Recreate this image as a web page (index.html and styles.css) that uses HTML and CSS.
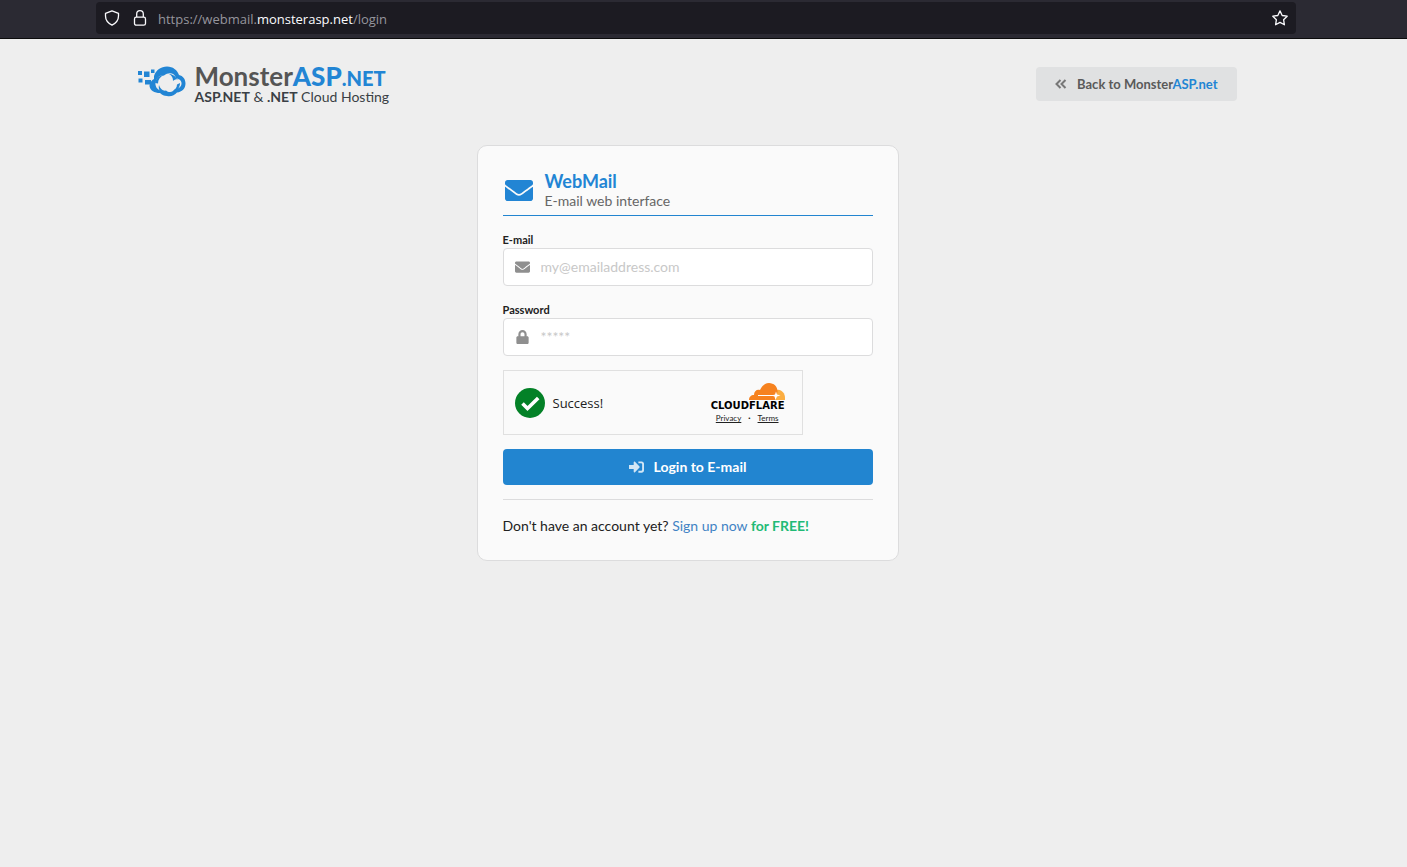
FILE: index.html
```html
<!DOCTYPE html>
<html lang="en">
<head>
<meta charset="utf-8">
<meta name="viewport" content="width=device-width, initial-scale=1">
<title>WebMail | MonsterASP.NET</title>
<link rel="stylesheet" href="styles.css">
</head>
<body>
<div class="browser-bar">
  <div class="address">
    <svg class="bar-icon" viewBox="0 0 16 16" aria-hidden="true"><path d="M8 .8 14.500 3.300V6c0 4-2.300 7-6.500 9.200C3.800 13 1.500 10 1.500 6V3.300Z"/></svg>
    <svg class="bar-icon" viewBox="0 0 16 16" aria-hidden="true"><rect x="2.500" y="7.200" width="11" height="8" rx="1.800"/><path d="M4.700 7V4a3.300 3.300 0 0 1 6.600 0v3"/></svg>
    <span class="url">https://webmail.<span class="domain">monsterasp.net</span>/login</span>
    <svg class="bar-icon star" viewBox="0 0 16 16" aria-hidden="true"><path d="M8 .9l2.200 4.600 5 .7-3.600 3.500.8 5.100L8 12.400l-4.400 2.400.8-5.100L.8 6.200l5-.7Z"/></svg>
  </div>
</div>
<div class="page">
  <header class="site-header">
    <a class="brand" href="#">
      <svg class="brand-mark" viewBox="0 0 48 32" aria-hidden="true">
        <g fill="#2285d4">
          <rect x="0" y="5" width="4" height="4"/><rect x="6" y="5.500" width="5.500" height="5.500"/><rect x="13" y="3.500" width="3.500" height="3.500"/>
          <rect x="0.500" y="12.500" width="4" height="4"/><rect x="7" y="14" width="6" height="4.500"/>
          <path d="M16 10C18 4 23 .5 29 .5c6 0 10 3.500 12 8.500 4 1 6.500 4 6.500 8.500 0 5-3.500 8.500-8.500 9-2.500 3-6 4.200-10 3.500-3 0-5-1-7-3-5.500 0-10-2.500-10.500-7 0-3 2.500-6 4.500-7Z"/>
        </g>
        <path d="M18 15c1-4 4-6 8-5.500 5-4 11-2.500 12 3 3.500 0 6 2.500 5.500 5.500-.5 3.500-3.500 5-6.500 5-2 3.500-6 4-9 1.500-4 1-9-.5-10-4-.8-2-.8-3.500 0-5.500Z" fill="#eee"/>
        <g fill="#2285d4">
          <path d="M17 17c1-5 4-7.500 9-8-4 2-6 4.500-6 8.500Z"/>
          <path d="M31 8c3 0 6 1.500 7.500 4.500l3 1c-3-.5-5 0-6.500 1.500 0-3-1-5.500-4-7Z"/>
          <path d="M42 17c0 5-3 8-8 8.500 3-1.500 5-4 5-7Z"/>
          <path d="M21 19c1 3.500 4 6 8 6.500l-2 2c-5-1-7-4-6-8.500Z"/>
        </g>
      </svg>
      <span class="brand-text">
        <span class="brand-name">Monster<b>ASP<small>.NET</small></b></span>
        <span class="brand-tag"><b>ASP.NET</b> &amp; <b>.NET</b> Cloud Hosting</span>
      </span>
    </a>
    <a class="back" href="#">
      <svg viewBox="0 0 12 10" aria-hidden="true"><path d="M5.500 1 1.500 5l4 4M10.500 1l-4 4 4 4"/></svg>
      <span>Back to Monster<span class="blue">ASP.net</span></span>
    </a>
  </header>
  <main class="card">
    <div class="title">
      <svg viewBox="0 0 512 384" aria-hidden="true"><path d="M502 127c4-3 10 0 10 4v205c0 26-22 48-48 48H48c-26 0-48-22-48-48V131c0-5 6-7 10-4 22 18 52 40 155 114 21 16 57 48 91 48s71-33 91-48c103-74 133-96 155-114ZM256 256c23 0 57-29 74-42 134-97 144-105 175-129 5-4 7-11 7-17V48c0-26-22-48-48-48H48C22 0 0 22 0 48v20c0 6 2 13 7 17 31 24 41 32 175 129 17 13 51 42 74 42Z"/></svg>
      <h1>WebMail<small>E-mail web interface</small></h1>
    </div>
    <form>
      <div class="field">
        <label for="email">E-mail</label>
        <div class="control">
          <svg viewBox="0 0 512 384" aria-hidden="true"><path d="M502 127c4-3 10 0 10 4v205c0 26-22 48-48 48H48c-26 0-48-22-48-48V131c0-5 6-7 10-4 22 18 52 40 155 114 21 16 57 48 91 48s71-33 91-48c103-74 133-96 155-114ZM256 256c23 0 57-29 74-42 134-97 144-105 175-129 5-4 7-11 7-17V48c0-26-22-48-48-48H48C22 0 0 22 0 48v20c0 6 2 13 7 17 31 24 41 32 175 129 17 13 51 42 74 42Z"/></svg>
          <input id="email" type="email" placeholder="my@emailaddress.com">
        </div>
      </div>
      <div class="field">
        <label for="password">Password</label>
        <div class="control">
          <svg viewBox="0 0 448 512" aria-hidden="true"><path d="M400 224h-24v-72C376 68 308 0 224 0S72 68 72 152v72H48c-26 0-48 22-48 48v192c0 26 22 48 48 48h352c26 0 48-22 48-48V272c0-26-22-48-48-48Zm-104 0H152v-72c0-40 32-72 72-72s72 32 72 72Z"/></svg>
          <input id="password" type="password" placeholder="*****">
        </div>
      </div>
      <div class="turnstile">
        <svg class="check" viewBox="0 0 30 30" aria-hidden="true"><circle cx="15" cy="15" r="15" fill="#038127"/><path d="m7.500 15.500 5 5L23.200 10" fill="none" stroke="#fff" stroke-width="3.600"/></svg>
        <span class="success">Success!</span>
        <div class="cloudflare">
          <svg viewBox="0 0 36 17" aria-hidden="true">
            <path fill="#fbad41" d="M28 7c4-1 8 3 8 8v2H25Z"/>
            <path fill="#f6821f" d="M0 17c0-3 2-5 5-5 0-4 3-6 6-5C13 3 16 0 20 0c5 0 9 4 8.500 9L26 17Z"/>
            <path d="M9 12.500h18" fill="none" stroke="#fff" stroke-width="1"/>
            <path fill="#fff" d="m27 8.500 1 3 3.500 1-3.500 1-1.500 3.500-1-3.500-3-1 3.500-1Z"/>
          </svg>
          <span class="wordmark">CLOUDFLARE</span>
          <span class="legal"><a href="#">Privacy</a><span>·</span><a href="#">Terms</a></span>
        </div>
      </div>
      <button class="login" type="submit">
        <svg viewBox="0 0 16 14" aria-hidden="true"><path d="M0 4.800h5V2c0-.8.900-1.200 1.400-.6l4.800 5c.3.300.3.800 0 1.200l-4.800 5c-.5.600-1.400.2-1.400-.6V9.200H0ZM10 1h3.500C15 1 16 2 16 3.500v7c0 1.500-1 2.500-2.500 2.500H10v-2h3c.6 0 1-.4 1-1V4c0-.6-.4-1-1-1h-3Z"/></svg>
        Login to E-mail
      </button>
    </form>
    <p class="signup">Don't have an account yet? <a href="#">Sign up now <b>for FREE!</b></a></p>
  </main>
</div>
</body>
</html>
```
FILE: styles.css
```css
* { box-sizing: border-box; }
body {
  margin: 0;
  background: #eee;
  color: #212121;
  font: 14px/20px Lato, "Liberation Sans", sans-serif;
}
a { color: inherit; text-decoration: none; }
svg { display: block; flex: none; }

.browser-bar {
  padding: 2px 111px 4px 96px;
  background: #2b2a33;
  border-bottom: 1px solid #0c0c0d;
}
.address {
  display: flex;
  align-items: center;
  height: 32px;
  padding: 0 8px;
  background: #1c1b22;
  border-radius: 4px;
}
.bar-icon {
  width: 16px;
  height: 16px;
  margin-right: 12px;
  fill: none;
  stroke: #fbfbfe;
  stroke-width: 1.3;
  stroke-linejoin: round;
}
.bar-icon.star { margin: 0 0 0 auto; }
.url { margin-left: -2px; padding-top: 2px; font: 13px/20px "Open Sans", sans-serif; color: #96959d; }
.domain { color: #fbfbfe; }

.page { padding-right: 32px; }
.site-header {
  display: flex;
  justify-content: space-between;
  align-items: center;
  max-width: 1100px;
  margin: 0 auto;
  padding: 24px 0;
}
.brand { display: flex; align-items: center; gap: 9px; color: #3a3f45; }
.brand-mark { width: 48px; height: 32px; margin-bottom: 4px; }
.brand-text { display: flex; flex-direction: column; }
.brand-name { font-size: 26px; line-height: 26px; font-weight: 700; color: #555; }
.brand-name b { color: #2285d4; }
.brand-name small { font-size: 20px; line-height: 1; }
.brand-tag { font-size: 14px; line-height: 16px; }
.back {
  display: flex;
  align-items: center;
  gap: 10px;
  height: 34px;
  padding: 0 19px;
  margin-right: 1px;
  background: #e0e1e2;
  border-radius: 4px;
  color: #5a5a5a;
  font-size: 13px;
  font-weight: 700;
}
.back svg { width: 12px; height: 10px; fill: none; stroke: #777; stroke-width: 2; }
.blue { color: #2285d4; }

.card {
  max-width: 422px;
  margin: 16px auto 0;
  padding: 24px 25px;
  background: #fafafa;
  border: 1px solid #dcdcdd;
  border-radius: 10px;
}
.title {
  display: flex;
  align-items: center;
  gap: 12px;
  padding: 0 0 5px 2px;
  margin-bottom: 16px;
  border-bottom: 1px solid #2285d0;
}
.title svg { width: 28px; height: 21px; fill: #2285d4; }
.title h1 { margin: 0; font-size: 18px; line-height: 22px; color: #2285d4; }
.title small { display: block; font-size: 14px; line-height: 18px; font-weight: 400; color: #666; }

.field + .field { margin-top: 16px; }
.field label { display: block; font-size: 11px; line-height: 16px; font-weight: 700; }
.control {
  display: flex;
  align-items: center;
  height: 38px;
  padding-left: 11px;
  background: #fff;
  border: 1px solid #dcdcdd;
  border-radius: 4px;
}
.control svg { width: 15px; height: 14px; fill: #8f8f8f; }
.control input {
  flex: 1;
  min-width: 0;
  height: 100%;
  padding: 0 12px 2px 11px;
  border: 0;
  outline: 0;
  background: none;
  color: inherit;
  font: inherit;
}
.control input::placeholder { color: #c8c8c8; opacity: 1; }

.turnstile {
  display: flex;
  align-items: center;
  max-width: 300px;
  height: 65px;
  margin-top: 14px;
  padding: 0 17px 0 11px;
  border: 1px solid #e0e0e0;
}
.check { width: 30px; height: 30px; }
.success { margin-left: 8px; font: 13px/20px "Open Sans", sans-serif; }
.cloudflare {
  display: flex;
  flex-direction: column;
  align-items: flex-end;
  margin-left: auto;
  padding-top: 2px;
}
.cloudflare svg { width: 36px; height: 17px; }
.wordmark { font: 700 10px/12px "DejaVu Sans", sans-serif; color: #000; }
.legal {
  display: flex;
  gap: 7px;
  padding-right: 6px;
  font: 8px/12px Lato, sans-serif;
}
.legal span { font-weight: 900; }
.legal a { text-decoration: underline; }

.login {
  display: flex;
  align-items: center;
  justify-content: center;
  gap: 10px;
  width: 100%;
  height: 36px;
  margin-top: 14px;
  border: 0;
  border-radius: 4px;
  background: #2285d0;
  color: #fff;
  font: 700 14px/20px Lato, sans-serif;
}
.login svg { width: 15px; height: 14px; fill: #fff; opacity: .8; }
.signup {
  margin: 14px 0 0;
  padding-top: 16px;
  border-top: 1px solid #dcdcdd;
}
.signup a { color: #4183c4; }
.signup b { color: #21ba75; }
```
